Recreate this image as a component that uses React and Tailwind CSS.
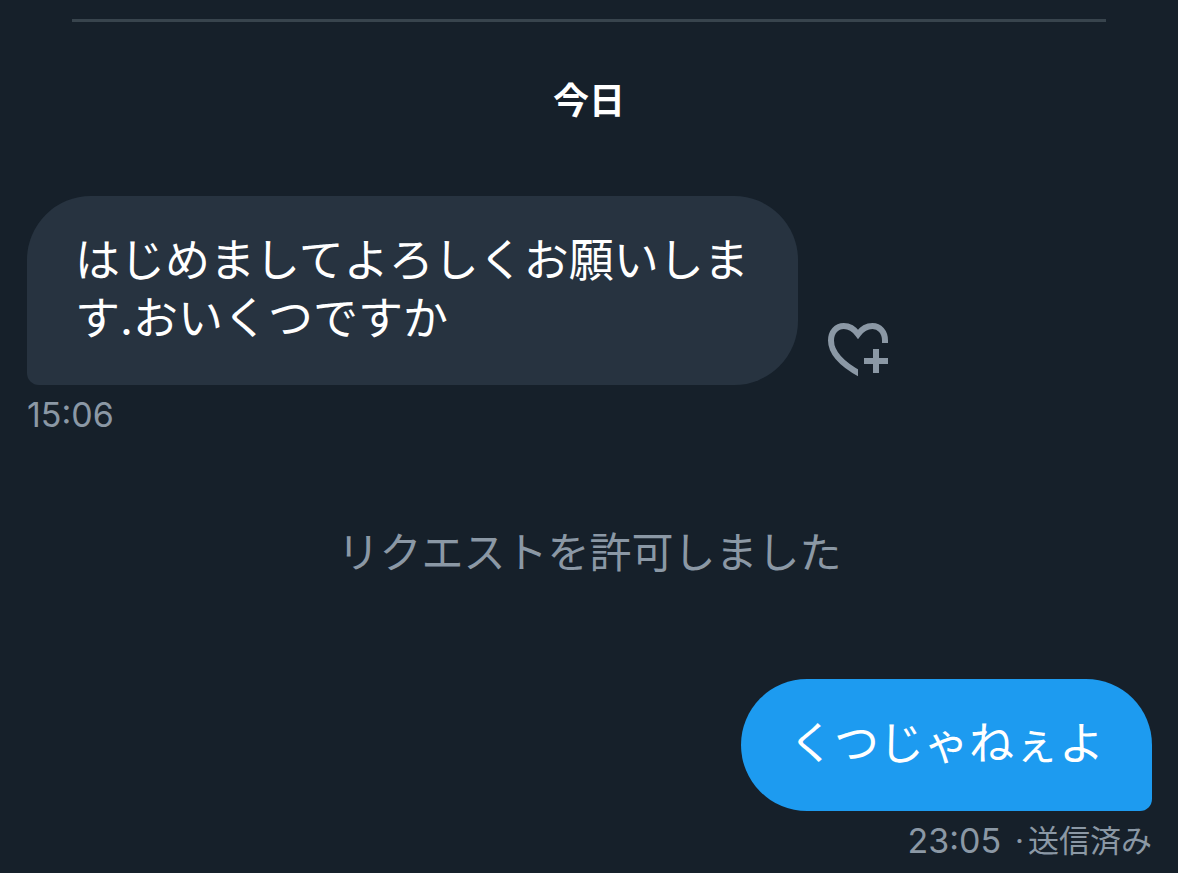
const MESSAGES = [
  { id: 1, text: 'はじめましてよろしくお願いします.おいくつですか', time: '15:06' },
  { id: 2, text: 'くつじゃねぇよ', time: '23:05', status: '送信済み' },
]

function HeartPlusIcon() {
  return (
    <svg className="w-[60px] h-[54px]" viewBox="0 0 60 54" fill="none" aria-hidden="true">
      <clipPath id="heart-left">
        <path d="M0 0H60V20H30V54H0Z" />
      </clipPath>
      <path
        d="M57 22V17.5C57 9 51.5 3 44.5 3C38.5 3 34 5.8 30 11.2C26 5.8 21.5 3 15.8 3C8.5 3 3 9 3 17.5C3 29.5 13.5 41 33 51.5"
        stroke="currentColor"
        strokeWidth="6"
        clipPath="url(#heart-left)"
      />
      <path d="M45 26H51V35H60V41H51V50H45V41H36V35H45Z" fill="currentColor" />
    </svg>
  )
}

function Received({ message }) {
  return (
    <div className="flex flex-col items-start">
      <div className="flex items-end gap-[30px]">
        <p className="max-w-[771px] rounded-[64px] rounded-bl-xl bg-[#273340] px-12 pt-9 pb-[37px] text-[45px] leading-[58px] text-white break-all">
          {message.text}
        </p>
        <button type="button" aria-label="リアクションを追加" className="mb-2 shrink-0 text-[#8b98a5]">
          <HeartPlusIcon />
        </button>
      </div>
      <time className="mt-2 text-[34px] leading-[44px]">{message.time}</time>
    </div>
  )
}

function Sent({ message }) {
  return (
    <div className="flex flex-col items-end">
      <p className="rounded-[66px] rounded-br-xl bg-[#1d9bf0] px-12 pt-9 pb-[38px] text-[45px] leading-[58px] text-white">
        {message.text}
      </p>
      <div className="mt-2 flex items-center text-[31px] leading-[44px]">
        <time className="mr-[14px] text-[34px]">{message.time}</time>
        <span className="mr-1">·</span>
        <span>{message.status}</span>
      </div>
    </div>
  )
}

export default function App() {
  const [first, second] = MESSAGES

  return (
    <main
      lang="ja"
      className="min-h-screen overflow-hidden bg-[#16202a] pt-[19px] font-['Inter','Noto_Sans_CJK_JP',sans-serif] text-[#8b98a5]"
    >
      <hr className="mx-[72px] border-0 h-[3px] bg-[#38444d]" />
      <h2 className="mt-[54px] text-center text-[36px] leading-[50px] font-bold text-white">今日</h2>
      <div className="mt-[70px] pl-[27px] pr-[26px]">
        <Received message={first} />
        <p className="mt-[87px] mb-[97px] text-center text-[42px] leading-[58px]">リクエストを許可しました</p>
        <Sent message={second} />
      </div>
    </main>
  )
}
